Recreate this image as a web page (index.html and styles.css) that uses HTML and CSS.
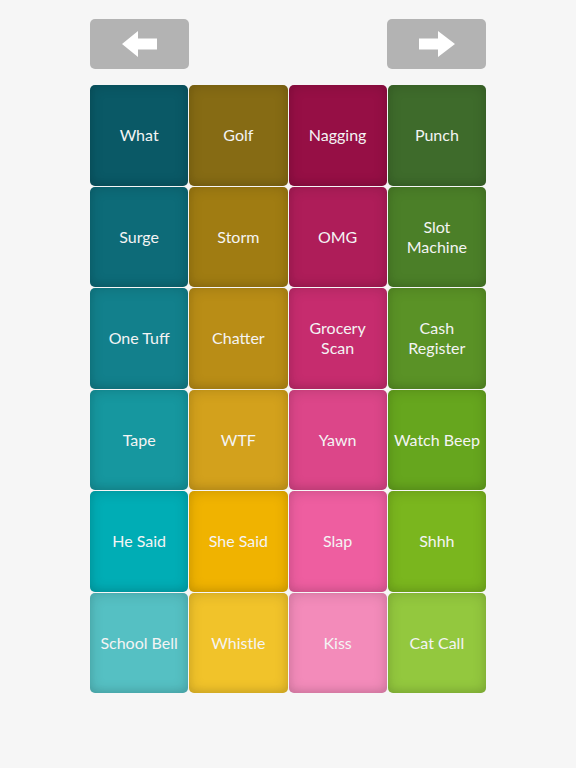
FILE: index.html
```html
<!DOCTYPE html>
<html>
<head>
<meta charset="utf-8">
<link rel="stylesheet" href="styles.css">
</head>
<body>
<div class="page">
  <div class="nav">
    <button class="navbtn" aria-label="Back">
      <svg width="35" height="26" viewBox="0 0 35 26"><polygon points="0,13 16,0 16,7.5 35,7.5 35,18.5 16,18.5 16,26" fill="#fff"/></svg>
    </button>
    <button class="navbtn" aria-label="Forward">
      <svg width="36" height="26" viewBox="0 0 36 26"><polygon points="36,13 19,0 19,7.5 0,7.5 0,18.5 19,18.5 19,26" fill="#fff"/></svg>
    </button>
  </div>
  <div class="grid">
    <div class="tile c11">What</div>
    <div class="tile c12">Golf</div>
    <div class="tile c13">Nagging</div>
    <div class="tile c14">Punch</div>
    <div class="tile c21">Surge</div>
    <div class="tile c22">Storm</div>
    <div class="tile c23">OMG</div>
    <div class="tile c24">Slot<br>Machine</div>
    <div class="tile c31">One Tuff</div>
    <div class="tile c32">Chatter</div>
    <div class="tile c33">Grocery<br>Scan</div>
    <div class="tile c34">Cash<br>Register</div>
    <div class="tile c41">Tape</div>
    <div class="tile c42">WTF</div>
    <div class="tile c43">Yawn</div>
    <div class="tile c44">Watch Beep</div>
    <div class="tile c51">He Said</div>
    <div class="tile c52">She Said</div>
    <div class="tile c53">Slap</div>
    <div class="tile c54">Shhh</div>
    <div class="tile c61">School Bell</div>
    <div class="tile c62">Whistle</div>
    <div class="tile c63">Kiss</div>
    <div class="tile c64">Cat Call</div>
  </div>
</div>
</body>
</html>
```
FILE: styles.css
```css
html, body {
  margin: 0;
  padding: 0;
  background: #f6f6f6;
}
.page {
  width: 396px;
  margin: 0 auto;
  padding-top: 19px;
}
.nav {
  display: flex;
  justify-content: space-between;
  margin-bottom: 16px;
}
.navbtn {
  width: 99px;
  height: 50px;
  border: none;
  border-radius: 5px;
  background: #b3b3b3;
  display: flex;
  align-items: center;
  justify-content: center;
  padding: 0;
}
.grid {
  display: grid;
  grid-template-columns: repeat(4, 1fr);
  grid-auto-rows: 100.5px;
  gap: 1px;
}
.tile {
  border-radius: 5px;
  display: flex;
  align-items: center;
  justify-content: center;
  text-align: center;
  color: #f4f4f4;
  font-family: Lato, "Open Sans", sans-serif;
  font-size: 16px;
  line-height: 20px;
  box-shadow: inset 0 0 14px rgba(0,0,0,0.16), inset 0 -3px 6px rgba(0,0,0,0.06);
}
.c11 { background: #0a5966; }
.c12 { background: #866b14; }
.c13 { background: #960f45; }
.c14 { background: #3e6b2b; }
.c21 { background: #0d6b78; }
.c22 { background: #a07c12; }
.c23 { background: #ae1d59; }
.c24 { background: #4b7f28; }
.c31 { background: #12808c; }
.c32 { background: #b98d16; }
.c33 { background: #c62c6e; }
.c34 { background: #5a9226; }
.c41 { background: #16979f; }
.c42 { background: #d3a11c; }
.c43 { background: #dc4689; }
.c44 { background: #66a61e; }
.c51 { background: #00adb5; }
.c52 { background: #f0b300; }
.c53 { background: #ee5ea0; }
.c54 { background: #7ab61e; }
.c61 { background: #55c0c3; }
.c62 { background: #f1c32a; }
.c63 { background: #f38bba; }
.c64 { background: #93c83e; }
```
